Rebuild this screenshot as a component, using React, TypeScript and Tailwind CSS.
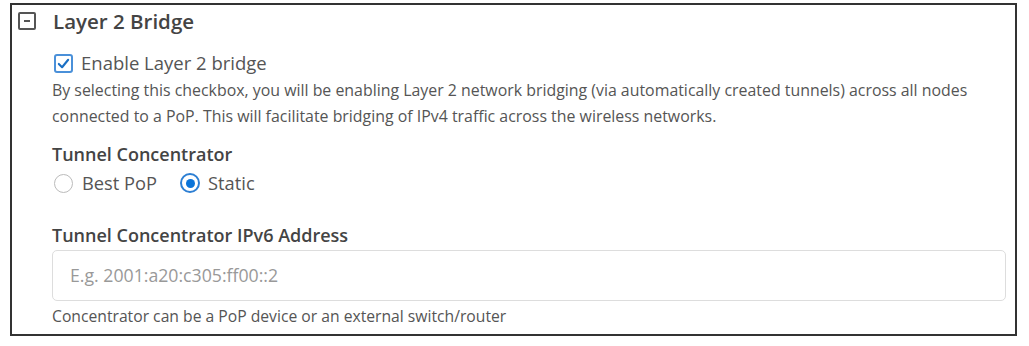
export default function App() {
  return (
    <div className="w-[1029px] h-[346px] bg-white pt-[3px] pl-[10px] font-['Open_Sans',sans-serif]">
      <div className="w-[1007px] h-[333px] border-2 border-[#333] flex flex-col">
        {/* Header */}
        <div className="flex items-center gap-[17px] pl-[6px] pt-[3px]">
          <div className="w-[18px] h-[18px] border-2 border-[#555] rounded-[2px] flex items-center justify-center">
            <div className="w-[6px] h-[1.5px] bg-[#555]" />
          </div>
          <h2 className="text-[20.5px] font-semibold text-[#444] leading-[26px]">Layer 2 Bridge</h2>
        </div>

        <div className="pl-[40px] pr-[8px]">
          {/* Checkbox */}
          <label className="flex items-center gap-[8px] mt-[18px] ml-[2px]">
            <span className="w-[19px] h-[19px] border-2 border-[#4a90d9] rounded-[3px] flex items-center justify-center bg-white">
              <svg viewBox="0 0 16 16" className="w-[15px] h-[15px]">
                <path d="M3 8.5 L6.5 12 L13 4" fill="none" stroke="#1a6fc4" strokeWidth="2.2" strokeLinecap="round" strokeLinejoin="round" />
              </svg>
            </span>
            <span className="text-[18.5px] text-[#555] leading-[22px]">Enable Layer 2 bridge</span>
          </label>
          <p className="text-[15.9px] text-[#555] leading-[26px] mt-[3px] whitespace-nowrap">
            By selecting this checkbox, you will be enabling Layer 2 network bridging (via automatically created tunnels) across all nodes
            <br />
            connected to a PoP. This will facilitate bridging of IPv4 traffic across the wireless networks.
          </p>

          {/* Tunnel Concentrator */}
          <div className="mt-[14px] text-[18px] font-semibold text-[#444] leading-[22px]">Tunnel Concentrator</div>
          <div className="flex items-center mt-[7px] ml-[2px] text-[18.3px] text-[#555] leading-[22px]">
            <span className="w-[19px] h-[19px] rounded-full border border-[#bbb]" />
            <span className="ml-[9px]">Best PoP</span>
            <span className="ml-[23px] w-[20px] h-[20px] rounded-full border-2 border-[#2d7fd3] flex items-center justify-center">
              <span className="w-[9px] h-[9px] rounded-full bg-[#0a74d9]" />
            </span>
            <span className="ml-[8px]">Static</span>
          </div>

          {/* IPv6 Address */}
          <div className="mt-[30px] text-[18px] font-semibold text-[#444] leading-[22px]">Tunnel Concentrator IPv6 Address</div>
          <div className="mt-[4px] w-[954px] h-[51px] border border-[#ddd] rounded-[5px] flex items-center px-[17px]">
            <span className="text-[17.7px] text-[#999]">E.g. 2001:a20:c305:ff00::2</span>
          </div>
          <p className="mt-[5px] text-[15.7px] text-[#555] leading-[20px]">Concentrator can be a PoP device or an external switch/router</p>
        </div>
      </div>
    </div>
  );
}
